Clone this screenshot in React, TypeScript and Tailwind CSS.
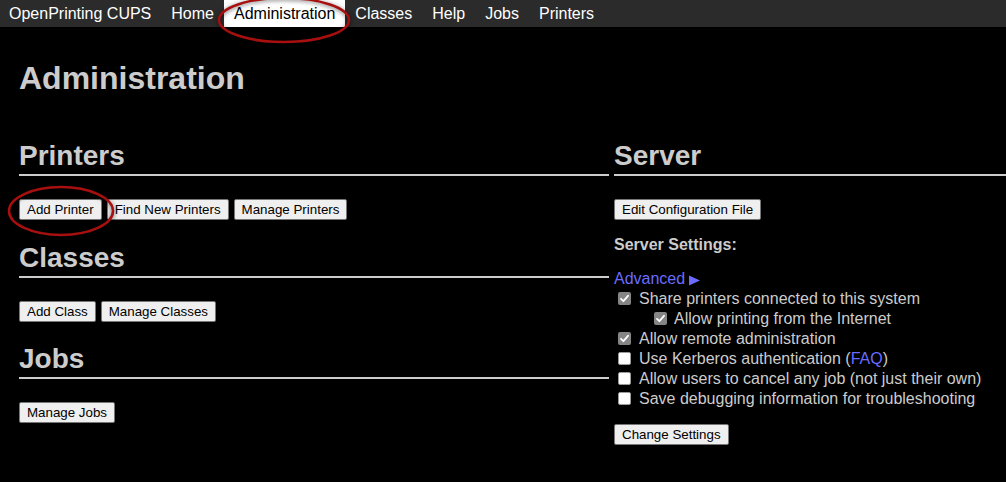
import React from "react";

const Btn = ({ children }: { children: React.ReactNode }) => (
  <button className="h-[21px] px-[7px] bg-[#efefef] border border-[#767676] rounded-[2px] text-[13.333px] leading-[17px] text-black whitespace-nowrap">
    {children}
  </button>
);

const H2 = ({ children, className = "" }: { children: React.ReactNode; className?: string }) => (
  <h2 className={`text-[28px] leading-[32px] font-bold text-[#cccccc] pb-[2px] border-b-2 border-[#cccccc] ${className}`}>
    {children}
  </h2>
);

const Check = ({ checked }: { checked: boolean }) =>
  checked ? (
    <span className="mt-[3px] w-[13px] h-[13px] rounded-[2px] bg-[#858585] flex items-center justify-center shrink-0">
      <svg width="11" height="11" viewBox="0 0 11 11">
        <path d="M2 5.8 L4.4 8.2 L9 2.8" fill="none" stroke="#ffffff" strokeWidth="1.8" strokeLinecap="round" strokeLinejoin="round" />
      </svg>
    </span>
  ) : (
    <span className="mt-[3px] w-[13px] h-[13px] rounded-[2px] bg-white border border-[#9a9a9a] shrink-0" />
  );

const Row = ({ checked, indent = false, children }: { checked: boolean; indent?: boolean; children: React.ReactNode }) => (
  <div className={`flex items-start h-[20px] ${indent ? "pl-[40px] gap-[7px]" : "pl-[4px] gap-[8px]"}`}>
    <Check checked={checked} />
    <span className="leading-[20px] whitespace-nowrap">{children}</span>
  </div>
);

export default function App() {
  return (
    <div className="relative w-[1006px] h-[482px] bg-black overflow-hidden font-['Liberation_Sans',Arial,sans-serif] text-[16px]">
      <nav className="flex h-[27px] bg-[#2b2b2b] text-white leading-[27px] whitespace-nowrap">
        <a className="pl-[9px] pr-[10px]">OpenPrinting CUPS</a>
        <a className="px-[10px]">Home</a>
        <a className="px-[10px] bg-white text-black">Administration</a>
        <a className="px-[10px]">Classes</a>
        <a className="px-[10px]">Help</a>
        <a className="px-[10px]">Jobs</a>
        <a className="px-[10px]">Printers</a>
      </nav>

      <div className="pl-[19px]">
        <h1 className="mt-[33px] text-[32px] leading-[37px] font-bold text-[#cccccc]">Administration</h1>

        <div className="flex gap-[5px] mt-[43px]">
          <div className="w-[590px] shrink-0">
            <H2>Printers</H2>
            <div className="flex gap-[5px] mt-[23px]">
              <Btn>Add Printer</Btn>
              <Btn>Find New Printers</Btn>
              <Btn>Manage Printers</Btn>
            </div>
            <H2 className="mt-[22px]">Classes</H2>
            <div className="flex gap-[5px] mt-[23px]">
              <Btn>Add Class</Btn>
              <Btn>Manage Classes</Btn>
            </div>
            <H2 className="mt-[21px]">Jobs</H2>
            <div className="flex gap-[5px] mt-[23px]">
              <Btn>Manage Jobs</Btn>
            </div>
          </div>

          <div className="w-[420px] shrink-0 text-[#cccccc]">
            <H2>Server</H2>
            <div className="flex mt-[23px]">
              <Btn>Edit Configuration File</Btn>
            </div>
            <p className="mt-[16px] leading-[18px] font-bold">Server Settings:</p>
            <div className="mt-[16px] leading-[18px] flex items-center text-[#6b6bff]">
              <span>Advanced</span>
              <svg className="ml-[4px] mt-[3px]" width="11" height="11" viewBox="0 0 11 11">
                <polygon points="0,0.5 11,5.5 0,10.5" fill="#6b6bff" />
              </svg>
            </div>
            <div className="mt-[1px]">
              <Row checked>Share printers connected to this system</Row>
              <Row checked indent>Allow printing from the Internet</Row>
              <Row checked>Allow remote administration</Row>
              <Row checked={false}>
                Use Kerberos authentication (<span className="text-[#6b6bff]">FAQ</span>)
              </Row>
              <Row checked={false}>Allow users to cancel any job (not just their own)</Row>
              <Row checked={false}>Save debugging information for troubleshooting</Row>
            </div>
            <div className="flex mt-[15px]">
              <Btn>Change Settings</Btn>
            </div>
          </div>
        </div>
      </div>

      <svg
        className="absolute left-[216px] top-[-6px] pointer-events-none drop-shadow-[0_1px_2px_rgba(0,0,0,0.6)]"
        width="136"
        height="52"
        viewBox="0 0 136 52"
      >
        <ellipse cx="68" cy="26" rx="65" ry="22" fill="none" stroke="#a80f0f" strokeWidth="2.5" />
      </svg>
      <svg
        className="absolute left-[5px] top-[183px] pointer-events-none drop-shadow-[0_1px_2px_rgba(0,0,0,0.6)]"
        width="112"
        height="56"
        viewBox="0 0 112 56"
      >
        <ellipse cx="56" cy="28" rx="52" ry="24" fill="none" stroke="#a80f0f" strokeWidth="2.5" />
      </svg>
    </div>
  );
}
